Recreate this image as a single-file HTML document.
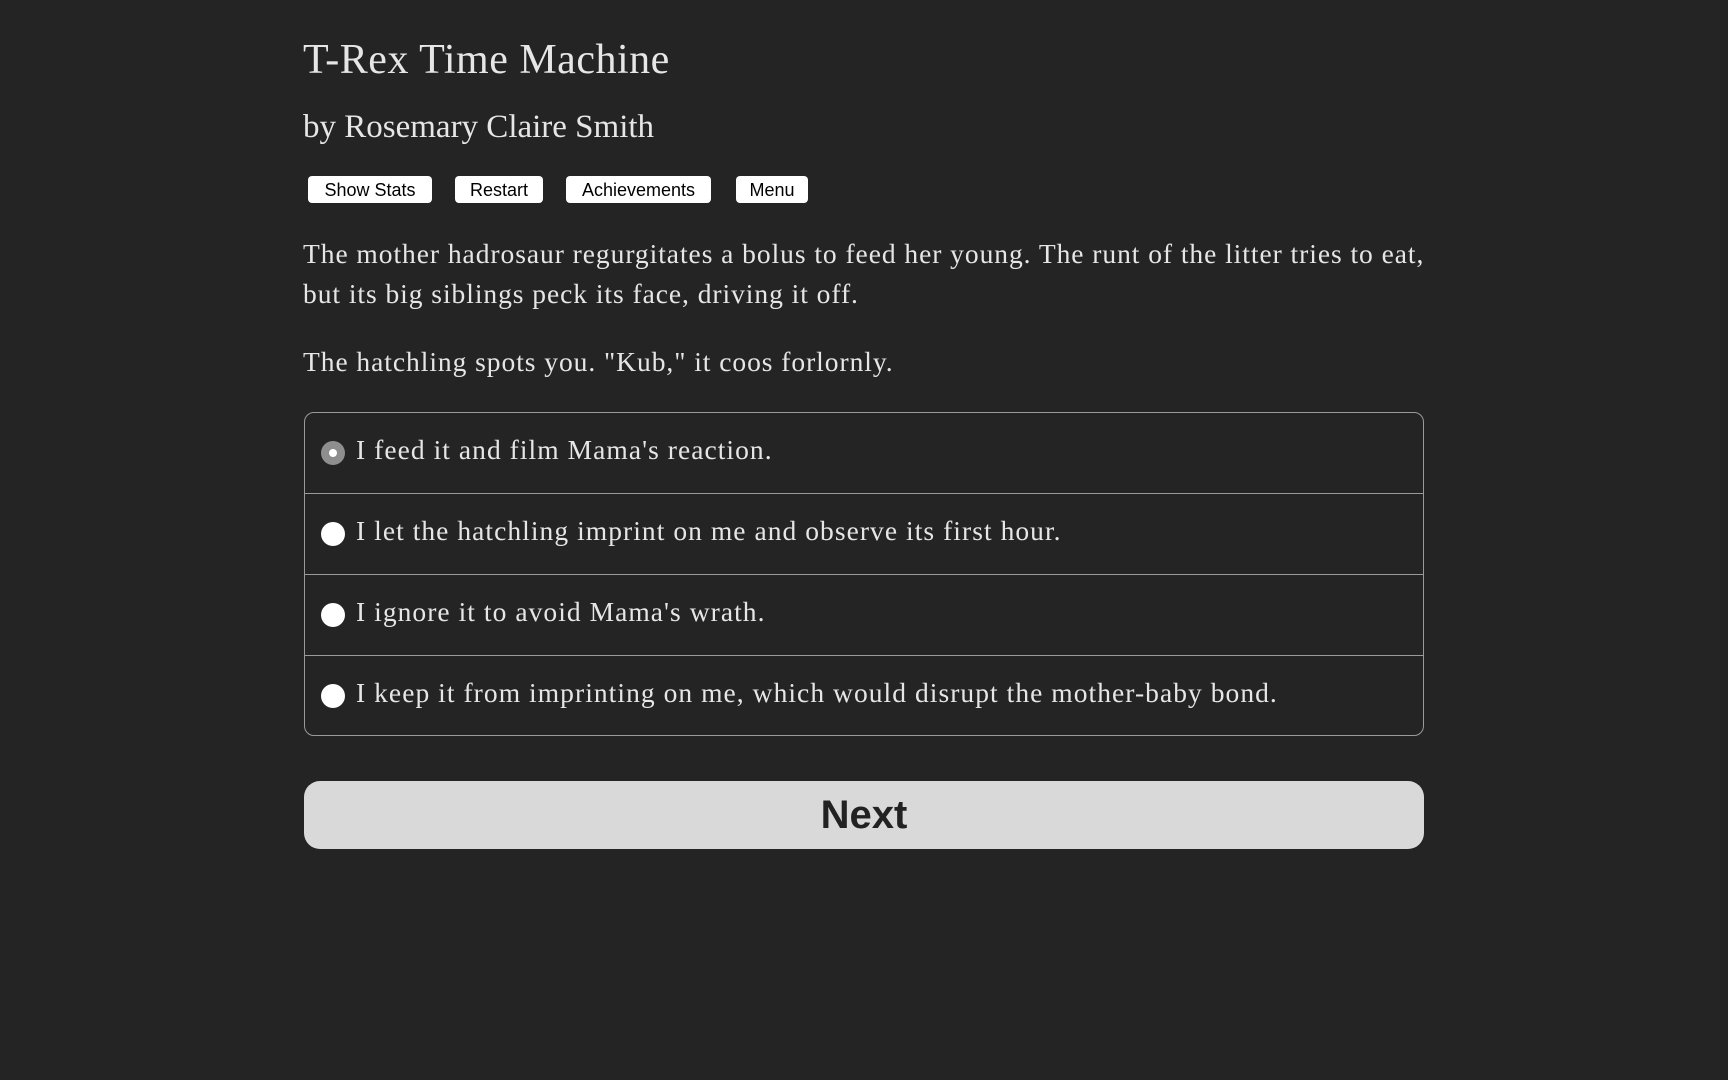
<!DOCTYPE html>
<html><head><meta charset="utf-8"><style>
body{margin:0;background:#242424;width:1728px;height:1080px;overflow:hidden;color:#e6e6e6;font-family:"Liberation Serif",serif;}
.a{position:absolute;white-space:nowrap;}
h1{position:absolute;left:303px;top:36px;margin:0;font-weight:normal;font-size:42px;letter-spacing:0.5px;color:#e6e6e6;}
.by{left:303px;top:109px;font-size:33px;letter-spacing:0;}
.btn{position:absolute;top:176px;height:27px;background:#fff;color:#000;border-radius:4px;font-family:"Liberation Sans",sans-serif;font-size:18px;line-height:28px;text-align:center;}
.p{left:303px;font-size:27.5px;letter-spacing:0.95px;}
.box{position:absolute;left:304px;top:412px;width:1118px;height:322px;border:1px solid #9a9a9a;border-radius:10px;}
.row{position:absolute;left:0;width:1118px;height:81px;border-top:1px solid #9a9a9a;}
.rad{position:absolute;left:16px;top:28px;width:24px;height:24px;border-radius:50%;background:#fff;}
.row span{position:absolute;left:51px;top:21px;font-size:27.5px;white-space:nowrap;letter-spacing:1.05px;}
.next{position:absolute;left:304px;top:781px;width:1120px;height:68px;background:#d9d9d9;border-radius:16px;color:#222;font-family:"Liberation Sans",sans-serif;font-weight:bold;font-size:40px;line-height:68px;text-align:center;}
</style></head><body>
<h1>T-Rex Time Machine</h1>
<div class="a by">by Rosemary Claire Smith</div>
<div class="btn" style="left:308px;width:124px">Show Stats</div>
<div class="btn" style="left:455px;width:88px">Restart</div>
<div class="btn" style="left:566px;width:145px">Achievements</div>
<div class="btn" style="left:736px;width:72px">Menu</div>
<div class="a p" style="top:238px">The mother hadrosaur regurgitates a bolus to feed her young. The runt of the litter tries to eat,</div>
<div class="a p" style="top:278px">but its big siblings peck its face, driving it off.</div>
<div class="a p" style="top:346px">The hatchling spots you. "Kub," it coos forlornly.</div>
<div class="box">
<div class="row" style="top:0;border-top:none"><div class="rad" style="background:#8e8e8e;top:28px"><div style="position:absolute;left:8px;top:8px;width:8px;height:8px;border-radius:50%;background:#fff"></div></div><span>I feed it and film Mama's reaction.</span></div>
<div class="row" style="top:80px"><div class="rad"></div><span>I let the hatchling imprint on me and observe its first hour.</span></div>
<div class="row" style="top:161px"><div class="rad"></div><span>I ignore it to avoid Mama's wrath.</span></div>
<div class="row" style="top:242px"><div class="rad"></div><span>I keep it from imprinting on me, which would disrupt the mother-baby bond.</span></div>
</div>
<div class="next">Next</div>
</body></html>
